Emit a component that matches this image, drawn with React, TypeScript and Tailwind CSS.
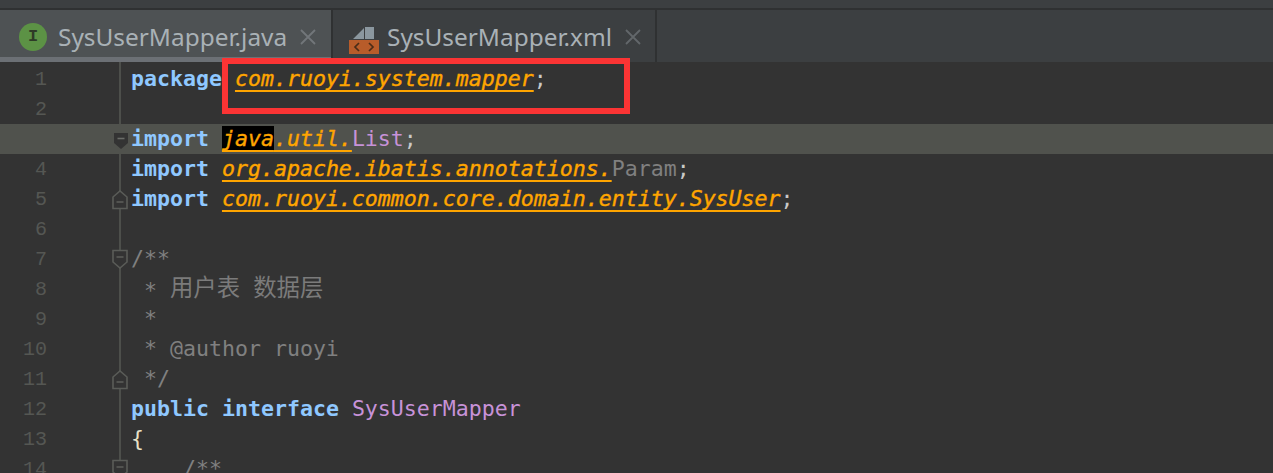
import { ReactNode } from "react";

const Pkg = ({ children, className = "" }: { children: ReactNode; className?: string }) => (
  <span className={`italic text-[#ffa500] underline decoration-2 underline-offset-[4px] [-webkit-text-stroke:0.4px_#ffa500] [text-decoration-skip-ink:none] ${className}`}>{children}</span>
);

const Kw = ({ children }: { children: ReactNode }) => <span className="font-bold text-[#8fc8ff]">{children}</span>;

const FoldOpen = () => (
  <svg width="16" height="20" viewBox="0 0 16 20" className="absolute left-[112px] top-[5px]">
    <path d="M1 1.5H15V13L8 19L1 13Z" fill="#333333" stroke="#5a5c58" strokeWidth="1.6" />
    <path d="M4.5 8H11.5" stroke="#5a5c58" strokeWidth="1.6" />
  </svg>
);

const FoldClose = () => (
  <svg width="16" height="20" viewBox="0 0 16 20" className="absolute left-[112px] top-[6px]">
    <path d="M1 18.5H15V7L8 1L1 7Z" fill="#333333" stroke="#5a5c58" strokeWidth="1.6" />
    <path d="M4.5 12H11.5" stroke="#5a5c58" strokeWidth="1.6" />
  </svg>
);

const FoldActive = () => (
  <svg width="16" height="18" viewBox="0 0 16 18" className="absolute left-[113px] top-[8px]">
    <path d="M1 1H15V11L8 17L1 11Z" fill="#333333" />
    <path d="M4.5 6.5H11.5" stroke="#6a6c68" strokeWidth="1.6" />
  </svg>
);

const Line = ({ n, fold, active, children }: { n?: number; fold?: ReactNode; active?: boolean; children?: ReactNode }) => (
  <div className={`relative flex h-[30px] items-center ${active ? "bg-[#50524d]" : ""}`}>
    <div className="w-[47px] pt-[1px] text-right font-['Liberation_Mono',monospace] text-[20px] text-[#555753]">{n}</div>
    {fold}
    <div className="ml-[84px] whitespace-pre text-[21.58px] text-[#c9c9c9]">{children}</div>
  </div>
);

const Comment = ({ children }: { children: ReactNode }) => <span className="text-[#808080]">{children}</span>;

const Cjk = ({ children }: { children: ReactNode }) => (
  <span className="relative top-[-2px] font-['Noto_Sans_CJK_SC',sans-serif] text-[23.4px] text-[#7b7b7b]">{children}</span>
);

const Close = ({ className }: { className: string }) => (
  <span className={`ml-[13px] ${className}`}>
    <svg width="16" height="16" viewBox="0 0 16 16"><path d="M1 1L15 15M15 1L1 15" stroke="currentColor" strokeWidth="1.8" /></svg>
  </span>
);

export default function App() {
  return (
    <div className="relative h-[473px] w-[1273px] overflow-hidden bg-[#333333] font-['DejaVu_Sans_Mono',monospace]">
      <div className="h-[10px] border-b-2 border-[#2f3132] bg-[#3c3f41]" />
      <div className="flex h-[52px] bg-[#3c3f41] font-['Noto_Sans',sans-serif] text-[24.4px] text-[#a9b1b6]">
        <div className="flex w-[331px] items-center border-b-[5px] border-[#6c7075] bg-[#4e5254] pl-[19px] pt-[7px]">
          <div className="flex h-[28px] w-[28px] items-center justify-center rounded-full bg-[#5c9245] font-['Liberation_Mono',monospace] text-[17px] font-bold text-[#2e3b27]">I</div>
          <span className="ml-[11px]">SysUserMapper.java</span>
          <Close className="text-[#72767a]" />
        </div>
        <div className="flex w-[326px] items-center border-x-2 border-[#2f3132] pl-[16px] pt-[2px]">
          <svg width="31" height="30" viewBox="0 0 31 30" className="mt-[3px]">
            <path d="M4 15L15 4V15ZM16 3H25V15H16Z" fill="#8b979f" />
            <rect x="0" y="16" width="30" height="14" fill="#b85c2a" />
            <path d="M10 19L6 23L10 27M20 19L24 23L20 27" fill="none" stroke="#4a2c18" strokeWidth="1.7" />
          </svg>
          <span className="ml-[7px]">SysUserMapper.xml</span>
          <Close className="text-[#62676a]" />
        </div>
      </div>
      <div className="relative pt-[2px]">
        <div className="absolute bottom-0 left-[119px] top-0 z-0 w-[2px] bg-[#4d4f4b]" />
        <div className="relative z-10">
          <Line n={1}><Kw>package</Kw> <Pkg>com.ruoyi.system.mapper</Pkg>;</Line>
          <Line n={2} />
          <Line active fold={<FoldActive />}>
            <Kw>import</Kw> <Pkg><span className="bg-black">java</span>.util.</Pkg><span className="text-[#c792d8]">List</span>;
          </Line>
          <Line n={4}><Kw>import</Kw> <Pkg>org.apache.ibatis.annotations.</Pkg><span className="text-[#808080]">Param</span>;</Line>
          <Line n={5} fold={<FoldClose />}><Kw>import</Kw> <Pkg>com.ruoyi.common.core.domain.entity.SysUser</Pkg>;</Line>
          <Line n={6} />
          <Line n={7} fold={<FoldOpen />}><Comment>/**</Comment></Line>
          <Line n={8}><Comment> * <Cjk>用户表</Cjk> <Cjk>数据层</Cjk></Comment></Line>
          <Line n={9}><Comment> *</Comment></Line>
          <Line n={10}><Comment> * @author ruoyi</Comment></Line>
          <Line n={11} fold={<FoldClose />}><Comment> */</Comment></Line>
          <Line n={12}><Kw>public</Kw> <Kw>interface</Kw> <span className="text-[#c792d8]">SysUserMapper</span></Line>
          <Line n={13}><span className="text-[#e8e2c8]">{"{"}</span></Line>
          <Line n={14} fold={<FoldOpen />}><Comment>    /**</Comment></Line>
        </div>
      </div>
      <div className="absolute left-[222px] top-[58px] h-[56px] w-[408px] border-[6px] border-[#fb3434]" />
    </div>
  );
}
